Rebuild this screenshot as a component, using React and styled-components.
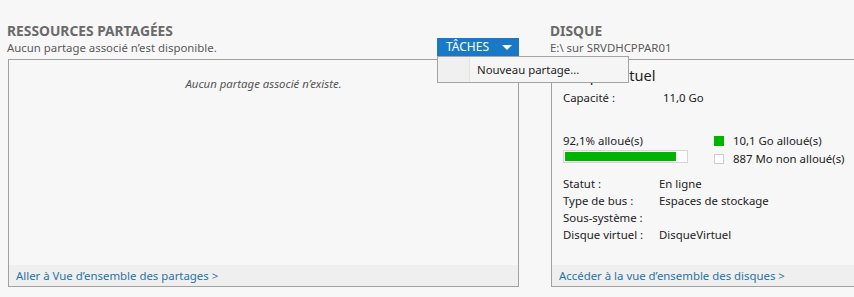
import React from 'react'
import styled, { createGlobalStyle } from 'styled-components'

const GlobalStyle = createGlobalStyle`
    html, body {
        margin: 0;
        padding: 0;
        background: #f7f7f7;
        overflow: hidden;
    }
    body {
        font-family: "Noto Sans", "Open Sans", sans-serif;
        font-size: 11.4px;
        color: #222;
    }
`

const App = () => {
    return (
        <>
            <GlobalStyle />
            <Page>
                <SharesSection />
                <DiskSection />
            </Page>
        </>
    )
}

const SharesSection = () => {
    return (
        <Section width="511px">
            <Header>
                <div>
                    <Title>RESSOURCES PARTAGÉES</Title>
                    <Subtitle>Aucun partage associé n’est disponible.</Subtitle>
                </div>
                <TaskWrap>
                    <TaskButton>
                        <span>TÂCHES</span>
                        <Caret />
                    </TaskButton>
                    <Menu>
                        <MenuGutter />
                        <MenuItem>Nouveau partage...</MenuItem>
                    </Menu>
                </TaskWrap>
            </Header>
            <Panel>
                <PanelBody>
                    <EmptyText>Aucun partage associé n’existe.</EmptyText>
                </PanelBody>
                <Footer>
                    <Link>Aller à Vue d’ensemble des partages &gt;</Link>
                </Footer>
            </Panel>
        </Section>
    )
}

const props = [
    ['Statut :', 'En ligne'],
    ['Type de bus :', 'Espaces de stockage'],
    ['Sous-système :', ''],
    ['Disque virtuel :', 'DisqueVirtuel'],
]

const DiskSection = () => {
    return (
        <Section width="340px">
            <Header>
                <div>
                    <Title>DISQUE</Title>
                    <Subtitle>E:\ sur SRVDHCPPAR01</Subtitle>
                </div>
            </Header>
            <Panel open>
                <DiskBody>
                    <DiskName>DisqueVirtuel</DiskName>
                    <Capacity>
                        <span>Capacité :</span>
                        <span>11,0 Go</span>
                    </Capacity>
                    <Usage>
                        <div>
                            <Label>92,1% alloué(s)</Label>
                            <Bar>
                                <BarFill style={{ width: '92.1%' }} />
                            </Bar>
                        </div>
                        <Legend>
                            <LegendRow>
                                <Swatch filled />
                                10,1 Go alloué(s)
                            </LegendRow>
                            <LegendRow>
                                <Swatch />
                                887 Mo non alloué(s)
                            </LegendRow>
                        </Legend>
                    </Usage>
                    <Props>
                        {props.map(([k, v]) => (
                            <React.Fragment key={k}>
                                <span>{k}</span>
                                <span>{v}</span>
                            </React.Fragment>
                        ))}
                    </Props>
                </DiskBody>
                <Footer>
                    <Link>Accéder à la vue d’ensemble des disques &gt;</Link>
                </Footer>
            </Panel>
        </Section>
    )
}

const Page = styled.div`
    display: flex;
    gap: 32px;
    padding: 20px 0 0 8px;
`

const Section = styled.div`
    width: ${p => p.width};
    flex-shrink: 0;
    display: flex;
    flex-direction: column;
`

const Header = styled.div`
    height: 39px;
    display: flex;
    justify-content: space-between;
    align-items: flex-end;
    margin-left: -1px;
`

const Title = styled.div`
    font-size: 13.8px;
    font-weight: 700;
    color: #6a6a6a;
    line-height: 18px;
`

const Subtitle = styled.div`
    color: #5a5a5a;
    line-height: 16px;
    padding-bottom: 3px;
`

const TaskWrap = styled.div`
    position: relative;
    margin-bottom: 3px;
`

const TaskButton = styled.div`
    width: 82px;
    height: 18px;
    box-sizing: border-box;
    background: #1a79c6;
    color: #fff;
    font-size: 12px;
    display: flex;
    align-items: center;
    justify-content: space-between;
    padding: 0 6px 0 9px;
    line-height: 18px;
`

const Caret = styled.span`
    width: 0;
    height: 0;
    border-left: 5px solid transparent;
    border-right: 5px solid transparent;
    border-top: 5px solid #fff;
    margin-right: 1px;
`

const Menu = styled.div`
    position: absolute;
    top: 18px;
    left: 0;
    width: 192px;
    height: 27px;
    box-sizing: border-box;
    background: #f5f5f5;
    border: 1px solid #a3a3a3;
    display: flex;
    align-items: stretch;
    z-index: 2;
`

const MenuGutter = styled.div`
    width: 31px;
    border-right: 1px solid #e2e2e2;
    background: #f0f0f0;
`

const MenuItem = styled.div`
    display: flex;
    align-items: center;
    padding-left: 7px;
    color: #1e1e1e;
`

const Panel = styled.div`
    height: 228px;
    box-sizing: border-box;
    border: 1px solid #a0a0a0;
    border-right: ${p => (p.open ? 'none' : '1px solid #a0a0a0')};
    display: flex;
    flex-direction: column;
    background: #f7f7f7;
`

const PanelBody = styled.div`
    flex: 1;
    display: flex;
    justify-content: center;
    padding-top: 16px;
`

const EmptyText = styled.div`
    font-style: italic;
    color: #555;
`

const Footer = styled.div`
    height: 21px;
    background: #efefef;
    display: flex;
    align-items: center;
    padding-left: 7px;
`

const Link = styled.span`
    color: #1f74a6;
`

const DiskBody = styled.div`
    flex: 1;
    padding: 5px 0 0 11px;
    display: flex;
    flex-direction: column;
`

const DiskName = styled.div`
    font-size: 14.6px;
    line-height: 21px;
    margin-bottom: 3px;
    color: #1e1e1e;
`

const Capacity = styled.div`
    display: grid;
    grid-template-columns: 100px auto;
    line-height: 18px;
`

const Usage = styled.div`
    display: flex;
    margin-top: 26px;
    gap: 26px;
`

const Label = styled.div`
    line-height: 16px;
`

const Bar = styled.div`
    margin-top: 1px;
    width: 125px;
    height: 13px;
    box-sizing: border-box;
    border: 1px solid #d6d6d6;
    background: #fff;
    padding: 1px;
`

const BarFill = styled.div`
    height: 100%;
    background: #00b400;
`

const Legend = styled.div`
    display: flex;
    flex-direction: column;
    gap: 2px;
`

const LegendRow = styled.div`
    display: flex;
    align-items: center;
    gap: 9px;
    line-height: 16px;
`

const Swatch = styled.span`
    width: 10px;
    height: 10px;
    box-sizing: border-box;
    background: ${p => (p.filled ? '#00b400' : '#fff')};
    border: 1px solid ${p => (p.filled ? '#00b400' : '#cfcfcf')};
`

const Props = styled.div`
    margin-top: 8px;
    display: grid;
    grid-template-columns: 96px auto;
    line-height: 17px;
`

export default App
